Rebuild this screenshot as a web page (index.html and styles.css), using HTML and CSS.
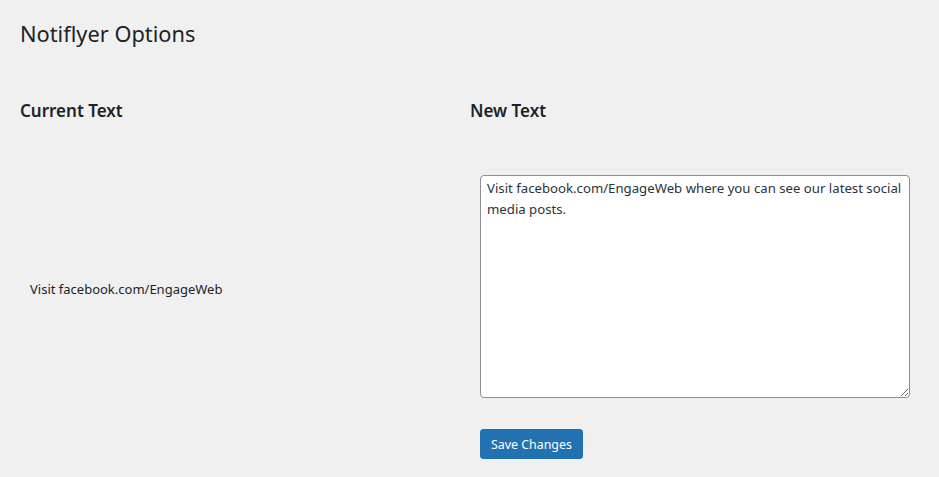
FILE: index.html
```html
<!DOCTYPE html>
<html>
<head>
<meta charset="utf-8">
<link rel="stylesheet" href="styles.css">
</head>
<body>
<div class="wrap">
  <h1 class="title">Notiflyer Options</h1>
  <div class="grid">
    <h2 class="head">Current Text</h2>
    <h2 class="head">New Text</h2>
    <div class="current">Visit facebook.com/EngageWeb</div>
    <div class="newcol">
      <textarea class="area">Visit facebook.com/EngageWeb where you can see our latest social media posts.</textarea>
    </div>
    <div></div>
    <div class="actions"><button class="btn">Save Changes</button></div>
  </div>
</div>
</body>
</html>
```
FILE: styles.css
```css
html, body {
  margin: 0;
  padding: 0;
  background: #f0f0f1;
  color: #1d2327;
  font-family: "Noto Sans", "Open Sans", sans-serif;
  font-size: 13px;
}
.wrap {
  padding: 20px 20px 0 20px;
}
.title {
  margin: 0;
  font-size: 21.8px;
  font-weight: 400;
  line-height: 28px;
}
.grid {
  display: grid;
  grid-template-columns: 450px 1fr;
  margin-top: 51px;
}
.head {
  margin: 0;
  font-size: 17px;
  font-weight: 600;
  line-height: 24px;
}
.current {
  display: flex;
  align-items: center;
  padding: 57px 10px 0 10px;
  font-size: 13px;
}
.newcol {
  padding: 52px 0 0 10px;
}
.area {
  display: block;
  box-sizing: border-box;
  width: 430px;
  height: 223px;
  border: 1px solid #8c8f94;
  border-radius: 4px;
  background: #fff;
  color: #2c3338;
  font-family: "Noto Sans", sans-serif;
  font-size: 13.2px;
  line-height: 21px;
  padding: 2px 6px;
  margin: 0;
  resize: both;
}
.actions {
  padding: 31px 0 0 10px;
}
.btn {
  box-sizing: border-box;
  height: 30px;
  padding: 0 10px;
  background: #2271b1;
  color: #fff;
  border: 1px solid #2271b1;
  border-radius: 3px;
  font-family: "Noto Sans", sans-serif;
  font-size: 12.4px;
}
```
